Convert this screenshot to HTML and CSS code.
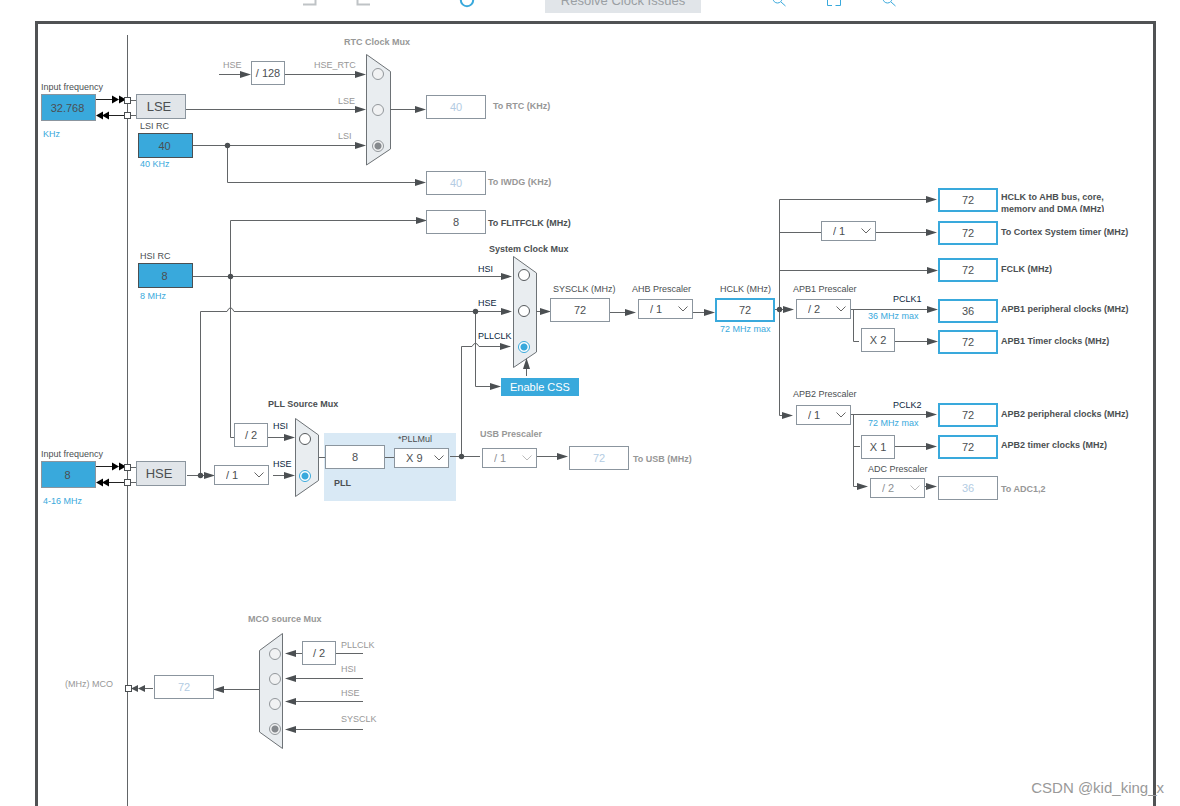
FILE: index.html
```html
<!DOCTYPE html>
<html lang="en">
<head>
<meta charset="utf-8">
<title>Clock Configuration</title>
<link rel="stylesheet" href="styles.css">
</head>
<body>
<div class="workspace">
  <header class="toolbar">
    <div class="tool-group history">
      <button class="tool" aria-label="Undo"><svg viewBox="0 0 16 13"><path class="grey" d="M2 11.5H14.5V0"/></svg></button>
      <button class="tool" aria-label="Redo"><svg viewBox="0 0 16 13"><path class="grey" d="M14 11.5H1.500V0"/></svg></button>
    </div>
    <button class="tool refresh" aria-label="Refresh"><svg viewBox="0 0 16 13"><circle class="blue thick" cx="8" cy="7" r="6.200"/></svg></button>
    <button class="resolve" disabled>Resolve Clock Issues</button>
    <div class="tool-group zoom">
      <button class="tool" aria-label="Zoom in"><svg viewBox="0 0 16 13"><circle class="blue" cx="6.500" cy="5.500" r="4.500"/><path class="blue" d="M10 9L14.500 13"/></svg></button>
      <button class="tool" aria-label="Fit to window"><svg viewBox="0 0 16 13"><path class="blue" d="M1.500 7V12.500H6M9.500 12.500H14.500V7"/></svg></button>
      <button class="tool" aria-label="Zoom out"><svg viewBox="0 0 16 13"><circle class="blue" cx="6.500" cy="5.500" r="4.500"/><path class="blue" d="M10 9L14.500 13"/></svg></button>
    </div>
  </header>

  <main class="board">
    <div class="pll-panel"></div>

    <svg class="wires" aria-hidden="true">
      <defs>
        <marker id="arrow" markerUnits="userSpaceOnUse" markerWidth="11" markerHeight="8" refX="11" refY="4" orient="auto"><path class="head" d="M0 .5L11 4L0 7.500Z"/></marker>
      </defs>
      <g class="mux">
        <path d="M366.500 54.500L390.500 71.500V149L366.500 165Z"/>
        <path d="M513.500 256.500L536.500 273V352L513.500 367.500Z"/>
        <path d="M295.500 418.500L318.500 435V480.500L295.500 496.500Z"/>
        <path d="M282.500 633.500L259.500 650.500V732L282.500 748.500Z"/>
      </g>
      <g class="wire">
        <path d="M127.500 35V806"/>
        <path d="M131 100.500H136M131 115.500H136M131 467.500H136M131 482.500H136"/>
        <path d="M186 109.500H358M193 145.500H358M227.500 145.500V182.500H418"/>
        <path d="M219 74.500H243M285 74.500H358M390 109.500H418"/>
        <path d="M193 276.500H503M230.500 437.500V220.500H420M230.500 437.500H234"/>
        <path d="M187 475.500H208M200.500 475.500V311.500H227Q230.500 304 234 311.500H503"/>
        <path d="M475.500 311.500V386.500H493M526.500 376V366M461.500 456.500V346.500H472Q475.500 340 479 346.500H503"/>
        <path d="M268 437.500H287M273 475.500H287M319 457.500H325M385 457.500H394M450 456.500H480M537 456.500H559"/>
        <path d="M536 311.500H544M610 312.500H628M693 312.500H708M775 309.500H786"/>
        <path d="M786 415.500H779.500V199.500H929M779.500 232.500H821M876 232.500H929M779.500 270.500H929"/>
        <path d="M851 309.500H929M853.500 309.500V341.500H859M895 341.500H929"/>
        <path d="M851 414.500H929M853.500 414.500V486.500H860M853.500 446.500H860M895 446.500H929M925 486.500H929"/>
        <path d="M153 688.500H140M259 689.500H222M302 653.500H293M336 653.500H363M363 678.500H293M363 701.500H293M363 729.500H293"/>
      </g>
      <g class="arrows">
        <path d="M241 74.500H251"/><path d="M356 74.500H366"/><path d="M356 109.500H366"/><path d="M356 145.500H366"/>
        <path d="M416 109.500H426"/><path d="M416 182.500H426"/><path d="M417 220.500H427"/>
        <path d="M502 276.500H512"/><path d="M502 311.500H512"/><path d="M501 346.500H511"/><path d="M491 386.500H501"/><path d="M526.500 369V358"/>
        <path d="M541 311.500H551"/><path d="M626 312.500H636"/><path d="M705 312.500H715"/><path d="M783 309.500H794"/><path d="M782 415.500H793"/>
        <path d="M926 199.500H937"/><path d="M926 232.500H937"/><path d="M927 270.500H938"/><path d="M927 309.500H938"/><path d="M927 341.500H938"/>
        <path d="M926 414.500H937"/><path d="M926 446.500H937"/><path d="M857 486.500H868"/><path d="M926 486.500H937"/>
        <path d="M206 475.500H215"/><path d="M284 437.500H295"/><path d="M284 475.500H295"/><path d="M557 456.500H568"/>
        <path d="M224 689.500H213"/><path d="M296 653.500H285"/><path d="M296 678.500H285"/><path d="M296 701.500H285"/><path d="M296 729.500H285"/>
      </g>
      <g class="dots">
        <circle cx="227.500" cy="145.500" r="2.700"/><circle cx="230.500" cy="276.500" r="2.700"/><circle cx="475.500" cy="311.500" r="2.700"/>
        <circle cx="200.500" cy="475.500" r="2.700"/><circle cx="461.500" cy="456.500" r="2.700"/><circle cx="779.500" cy="309.500" r="2.700"/>
        <path d="M131 688.500L138 685V692ZM138 688.500L145 685V692Z"/>
      </g>
      <g class="pins">
        <path d="M96 99.500H113M109 115.500H125M96 466.500H113M109 482.500H125"/>
        <path class="pin-head" d="M112 95.500L119 99.500L112 103.500ZM119 95.500L126 99.500L119 103.500ZM103 111.500L96 115.500L103 119.500ZM109 111.500L102 115.500L109 119.500Z"/>
        <path class="pin-head" d="M112 462.500L119 466.500L112 470.500ZM119 462.500L126 466.500L119 470.500ZM103 478.500L96 482.500L103 486.500ZM109 478.500L102 482.500L109 486.500Z"/>
      </g>
      <g class="ports">
        <rect x="124.500" y="97.500" width="6" height="6"/><rect x="124.500" y="112.500" width="6" height="6"/>
        <rect x="124.500" y="464.500" width="6" height="6"/><rect x="124.500" y="479.500" width="6" height="6"/>
        <rect x="125.500" y="685.500" width="6" height="6"/>
      </g>
    </svg>

    <label class="label lse-freq-label" for="lse-freq">Input frequency</label>
    <input class="source pin-source lse-freq" id="lse-freq" value="32.768">
    <span class="label limit lse-unit">KHz</span>
    <button class="oscillator lse">LSE</button>
    <label class="label lsi-label" for="lsi">LSI RC</label>
    <input class="source lsi" id="lsi" value="40" readonly>
    <span class="label limit lsi-unit">40 KHz</span>
    <label class="label hsi-label" for="hsi">HSI RC</label>
    <input class="source hsi" id="hsi" value="8" readonly>
    <span class="label limit hsi-unit">8 MHz</span>
    <label class="label hse-freq-label" for="hse-freq">Input frequency</label>
    <input class="source pin-source hse-freq" id="hse-freq" value="8">
    <span class="label limit hse-unit">4-16 MHz</span>
    <button class="oscillator hse">HSE</button>

    <span class="label title off rtc-title">RTC Clock Mux</span>
    <span class="label off rtc-hse-in">HSE</span>
    <span class="factor rtc-div">/ 128</span>
    <label class="label off rtc-hse-label" for="rtc-hse">HSE_RTC</label>
    <label class="label off rtc-lse-label" for="rtc-lse">LSE</label>
    <label class="label off rtc-lsi-label" for="rtc-lsi">LSI</label>
    <input type="radio" name="rtc" id="rtc-hse" class="rtc-hse" disabled>
    <input type="radio" name="rtc" id="rtc-lse" class="rtc-lse" disabled>
    <input type="radio" name="rtc" id="rtc-lsi" class="rtc-lsi" disabled checked>
    <input class="value rtc-out" id="rtc-out" value="40" disabled>
    <label class="label title off rtc-out-label" for="rtc-out">To RTC (KHz)</label>
    <input class="value iwdg" id="iwdg" value="40" disabled>
    <label class="label title off iwdg-label" for="iwdg">To IWDG (KHz)</label>
    <input class="value flitf" id="flitf" value="8" readonly>
    <label class="label title flitf-label" for="flitf">To FLITFCLK (MHz)</label>

    <span class="label title sys-title">System Clock Mux</span>
    <label class="label signal sys-hsi-label" for="sys-hsi">HSI</label>
    <label class="label signal sys-hse-label" for="sys-hse">HSE</label>
    <label class="label signal sys-pll-label" for="sys-pll">PLLCLK</label>
    <input type="radio" name="sys" id="sys-hsi" class="sys-hsi">
    <input type="radio" name="sys" id="sys-hse" class="sys-hse">
    <input type="radio" name="sys" id="sys-pll" class="sys-pll" checked>
    <button class="css-button">Enable CSS</button>

    <span class="label title pll-title">PLL Source Mux</span>
    <span class="factor pll-div">/ 2</span>
    <select class="pick hse-div" aria-label="HSE divider"><option>/ 1</option></select>
    <label class="label signal pll-hsi-label" for="pll-hsi">HSI</label>
    <label class="label signal pll-hse-label" for="pll-hse">HSE</label>
    <input type="radio" name="pll" id="pll-hsi" class="pll-hsi">
    <input type="radio" name="pll" id="pll-hse" class="pll-hse" checked>
    <input class="value pll-in" id="pll-in" value="8" readonly>
    <label class="label title pll-name" for="pll-in">PLL</label>
    <label class="label pll-mul-label" for="pll-mul">*PLLMul</label>
    <select class="pick pll-mul" id="pll-mul"><option>X 9</option></select>
    <label class="label title off usb-label" for="usb-div">USB Prescaler</label>
    <select class="pick usb-div" id="usb-div" disabled><option>/ 1</option></select>
    <input class="value usb" id="usb" value="72" disabled>
    <label class="label title off usb-out-label" for="usb">To USB (MHz)</label>

    <label class="label sysclk-label" for="sysclk">SYSCLK (MHz)</label>
    <input class="value sysclk" id="sysclk" value="72" readonly>
    <label class="label ahb-label" for="ahb">AHB Prescaler</label>
    <select class="pick ahb" id="ahb"><option>/ 1</option></select>
    <label class="label hclk-label" for="hclk">HCLK (MHz)</label>
    <input class="value editable hclk" id="hclk" value="72">
    <span class="label limit hclk-max">72 MHz max</span>
    <select class="pick cortex-div" aria-label="Cortex timer prescaler"><option>/ 1</option></select>
    <label class="label apb1-label" for="apb1">APB1 Prescaler</label>
    <select class="pick apb1" id="apb1"><option>/ 2</option></select>
    <span class="label signal pclk1">PCLK1</span>
    <span class="label limit pclk1-max">36 MHz max</span>
    <span class="factor apb1-mul">X 2</span>
    <label class="label apb2-label" for="apb2">APB2 Prescaler</label>
    <select class="pick apb2" id="apb2"><option>/ 1</option></select>
    <span class="label signal pclk2">PCLK2</span>
    <span class="label limit pclk2-max">72 MHz max</span>
    <span class="factor apb2-mul">X 1</span>
    <label class="label adc-label" for="adc-div">ADC Prescaler</label>
    <select class="pick adc-div" id="adc-div" disabled><option>/ 2</option></select>

    <input class="value editable out-ahb" id="out-ahb" value="72">
    <label class="label title out-ahb-label" for="out-ahb">HCLK to AHB bus, core,<br>memory and DMA (MHz)</label>
    <input class="value editable out-cortex" id="out-cortex" value="72">
    <label class="label title out-cortex-label" for="out-cortex">To Cortex System timer (MHz)</label>
    <input class="value editable out-fclk" id="out-fclk" value="72">
    <label class="label title out-fclk-label" for="out-fclk">FCLK (MHz)</label>
    <input class="value editable out-apb1" id="out-apb1" value="36">
    <label class="label title out-apb1-label" for="out-apb1">APB1 peripheral clocks (MHz)</label>
    <input class="value editable out-tim1" id="out-tim1" value="72">
    <label class="label title out-tim1-label" for="out-tim1">APB1 Timer clocks (MHz)</label>
    <input class="value editable out-apb2" id="out-apb2" value="72">
    <label class="label title out-apb2-label" for="out-apb2">APB2 peripheral clocks (MHz)</label>
    <input class="value editable out-tim2" id="out-tim2" value="72">
    <label class="label title out-tim2-label" for="out-tim2">APB2 timer clocks (MHz)</label>
    <input class="value out-adc" id="out-adc" value="36" disabled>
    <label class="label title off out-adc-label" for="out-adc">To ADC1,2</label>

    <span class="label title off mco-title">MCO source Mux</span>
    <span class="factor mco-div">/ 2</span>
    <label class="label off mco-pll-label" for="mco-pll">PLLCLK</label>
    <label class="label off mco-hsi-label" for="mco-hsi">HSI</label>
    <label class="label off mco-hse-label" for="mco-hse">HSE</label>
    <label class="label off mco-sys-label" for="mco-sys">SYSCLK</label>
    <input type="radio" name="mco" id="mco-pll" class="mco-pll" disabled>
    <input type="radio" name="mco" id="mco-hsi" class="mco-hsi" disabled>
    <input type="radio" name="mco" id="mco-hse" class="mco-hse" disabled>
    <input type="radio" name="mco" id="mco-sys" class="mco-sys" disabled checked>
    <input class="value mco" id="mco" value="72" disabled>
    <label class="label off mco-label" for="mco">(MHz) MCO</label>
  </main>
  <span class="watermark">CSDN @kid_king_x</span>
</div>
</body>
</html>
```

FILE: styles.css
```css
:root {
  --ink: #4b4f52;
  --edge: #8b959e;
  --wire: #626567;
  --blue: #39a9dc;
  --panel: #e1e5e9;
}

* { box-sizing: border-box; }

body {
  margin: 0;
  background: #fff;
  color: var(--ink);
  font-family: "Liberation Sans", Arial, sans-serif;
}

button, input, select {
  margin: 0;
  padding: 0;
  border-radius: 0;
  color: inherit;
  font-family: inherit;
  opacity: 1;
}

.workspace {
  position: relative;
  display: flex;
  flex-direction: column;
  min-height: 100vh;
  overflow: hidden;
}

/* Toolbar, scrolled partly out of view */
.toolbar {
  display: flex;
  align-items: flex-end;
  height: 13px;
  margin-bottom: 8px;
  padding-left: 301px;
}
.tool-group { display: flex; gap: 39px; }
.tool {
  display: block;
  width: 16px;
  height: 13px;
  margin-bottom: 7px;
  border: 0;
  background: none;
}
.tool svg { display: block; width: 16px; height: 13px; fill: none; overflow: visible; }
.tool .grey { stroke: #bfc3c6; stroke-width: 2; }
.tool .blue { stroke: var(--blue); stroke-width: 1; }
.tool .thick { stroke-width: 2; }
.refresh { margin-left: 87px; }
.resolve {
  width: 156px;
  height: 26px;
  margin-left: 70px;
  flex: none;
  border: 0;
  background: var(--panel);
  color: #9a9fa3;
  font-size: 13px;
}
.zoom { margin-left: 70px; }

.board {
  flex: 1;
  margin: 0 24px 0 35px;
  border: 3px solid #505254;
  border-bottom: 0;
}

/* Diagram canvas */
.wires {
  position: absolute;
  left: 0;
  top: 0;
  width: 100%;
  height: 100%;
  fill: none;
  pointer-events: none;
}
.wire { stroke: var(--wire); }
.mux { fill: #e9edf0; stroke: #6d7276; }
.arrows path { marker-end: url(#arrow); }
.head, .dots { fill: var(--ink); }
.pins { stroke: #222; }
.pin-head { fill: #000; stroke: none; }
.ports { fill: #fff; stroke: #4b4f52; }

.label, .value, .source, .pick, .factor, .oscillator, .css-button, .pll-panel, input[type="radio"] {
  position: absolute;
}

.label { font-size: 9px; line-height: 12px; white-space: nowrap; }
.title { font-weight: bold; }
.off { color: #979797; }
.limit { color: var(--blue); }
.signal { color: #0c1f3d; }

.value, .source, .factor, .pick { font-size: 11px; border: 1px solid var(--edge); background-color: #fff; }
.value { width: 60px; height: 24px; text-align: center; }
.value:disabled { color: #b3cce3; }
.editable { border: 2px solid var(--blue); }
.source { width: 55px; height: 25px; padding-right: 2px; border-color: var(--ink); background-color: var(--blue); text-align: center; }
.pin-source { height: 27px; border-color: var(--edge); }
.factor { width: 34px; height: 24px; line-height: 22px; text-align: center; }
.oscillator { width: 50px; height: 25px; padding-right: 4px; border: 1px solid var(--edge); background: var(--panel); font-size: 13px; }
.pick {
  width: 55px;
  height: 20px;
  padding-left: 11px;
  appearance: none;
  background-image: url("data:image/svg+xml,%3Csvg xmlns='http://www.w3.org/2000/svg' width='10' height='6'%3E%3Cpath d='M.5.5L5 5L9.500.5' fill='none' stroke='%23666'/%3E%3C/svg%3E");
  background-repeat: no-repeat;
  background-position: right 4px center;
}
.pick:disabled {
  color: #8d9194;
  background-image: url("data:image/svg+xml,%3Csvg xmlns='http://www.w3.org/2000/svg' width='10' height='6'%3E%3Cpath d='M.5.5L5 5L9.500.5' fill='none' stroke='%23bbb'/%3E%3C/svg%3E");
}
.css-button { left: 501px; top: 378px; width: 78px; height: 18px; border: 0; background: var(--blue); color: #fff; font-size: 11px; }

input[type="radio"] {
  width: 12px;
  height: 12px;
  appearance: none;
  border: 1px solid #55595c;
  border-radius: 50%;
  background: #fff;
}
input[type="radio"]:checked { border-color: var(--blue); background: radial-gradient(circle, var(--blue) 3px, #fff 4px); }
input[type="radio"]:disabled { border-color: #92979b; background: #f1f2f3; }
input[type="radio"]:disabled:checked { background: radial-gradient(circle, #85898d 3px, #f1f2f3 4px); }

/* Sources */
.lse-freq-label { left: 41px; top: 81px; }
.lse-freq { left: 41px; top: 94px; }
.lse-unit { left: 43px; top: 128px; }
.lse { left: 136px; top: 94px; }
.lsi-label { left: 140px; top: 120px; }
.lsi { left: 138px; top: 133px; }
.lsi-unit { left: 140px; top: 158px; }
.hsi-label { left: 140px; top: 250px; }
.hsi { left: 138px; top: 263px; }
.hsi-unit { left: 140px; top: 290px; }
.hse-freq-label { left: 41px; top: 448px; }
.hse-freq { left: 41px; top: 461px; }
.hse-unit { left: 43px; top: 495px; }
.hse { left: 136px; top: 461px; }

/* RTC and watchdog */
.rtc-title { left: 344px; top: 36px; }
.rtc-hse-in { left: 223px; top: 59px; }
.rtc-div { left: 251px; top: 61px; }
.rtc-hse-label { left: 314px; top: 59px; }
.rtc-lse-label { left: 338px; top: 95px; }
.rtc-lsi-label { left: 338px; top: 130px; }
.rtc-hse { left: 372px; top: 68px; }
.rtc-lse { left: 372px; top: 104px; }
.rtc-lsi { left: 372px; top: 140px; }
.rtc-out { left: 426px; top: 95px; }
.rtc-out-label { left: 493px; top: 100px; }
.iwdg { left: 426px; top: 171px; }
.iwdg-label { left: 488px; top: 176px; }
.flitf { left: 426px; top: 210px; }
.flitf-label { left: 488px; top: 217px; }

/* System clock mux */
.sys-title { left: 489px; top: 243px; }
.sys-hsi-label { left: 478px; top: 263px; }
.sys-hse-label { left: 478px; top: 297px; }
.sys-pll-label { left: 478px; top: 330px; }
.sys-hsi { left: 518px; top: 269px; }
.sys-hse { left: 518px; top: 305px; }
.sys-pll { left: 518px; top: 341px; }

/* PLL and USB */
.pll-title { left: 268px; top: 398px; }
.pll-div { left: 234px; top: 423px; }
.hse-div { left: 214px; top: 465px; }
.pll-hsi-label { left: 273px; top: 420px; }
.pll-hse-label { left: 273px; top: 458px; }
.pll-hsi { left: 299px; top: 433px; }
.pll-hse { left: 299px; top: 470px; }
.pll-panel { left: 324px; top: 433px; width: 132px; height: 68px; background: #d9e9f5; }
.pll-in { left: 325px; top: 445px; }
.pll-name { left: 334px; top: 477px; }
.pll-mul-label { left: 398px; top: 433px; }
.pll-mul { left: 394px; top: 448px; }
.usb-label { left: 480px; top: 428px; }
.usb-div { left: 482px; top: 448px; }
.usb { left: 569px; top: 446px; }
.usb-out-label { left: 633px; top: 453px; }

/* Bus clocks */
.sysclk-label { left: 553px; top: 283px; }
.sysclk { left: 550px; top: 298px; }
.ahb-label { left: 632px; top: 283px; }
.ahb { left: 638px; top: 299px; }
.hclk-label { left: 720px; top: 283px; }
.hclk { left: 715px; top: 298px; }
.hclk-max { left: 720px; top: 323px; }
.cortex-div { left: 821px; top: 221px; }
.apb1-label { left: 793px; top: 283px; }
.apb1 { left: 796px; top: 299px; }
.pclk1 { left: 893px; top: 293px; }
.pclk1-max { left: 868px; top: 310px; }
.apb1-mul { left: 861px; top: 328px; }
.apb2-label { left: 793px; top: 388px; }
.apb2 { left: 796px; top: 405px; }
.pclk2 { left: 893px; top: 399px; }
.pclk2-max { left: 868px; top: 417px; }
.apb2-mul { left: 861px; top: 435px; }
.adc-label { left: 868px; top: 463px; }
.adc-div { left: 870px; top: 478px; }

/* Outputs */
.out-ahb { left: 938px; top: 188px; }
.out-ahb-label { left: 1001px; top: 191px; height: 21px; overflow: hidden; }
.out-cortex { left: 938px; top: 221px; }
.out-cortex-label { left: 1001px; top: 226px; }
.out-fclk { left: 938px; top: 258px; }
.out-fclk-label { left: 1001px; top: 263px; }
.out-apb1 { left: 938px; top: 299px; }
.out-apb1-label { left: 1001px; top: 303px; }
.out-tim1 { left: 938px; top: 330px; }
.out-tim1-label { left: 1001px; top: 335px; }
.out-apb2 { left: 938px; top: 403px; }
.out-apb2-label { left: 1001px; top: 408px; }
.out-tim2 { left: 938px; top: 435px; }
.out-tim2-label { left: 1001px; top: 439px; }
.out-adc { left: 938px; top: 476px; }
.out-adc-label { left: 1001px; top: 483px; }

/* MCO */
.mco-title { left: 248px; top: 613px; }
.mco-div { left: 302px; top: 641px; }
.mco-pll-label { left: 341px; top: 639px; }
.mco-hsi-label { left: 341px; top: 663px; }
.mco-hse-label { left: 341px; top: 687px; }
.mco-sys-label { left: 341px; top: 713px; }
.mco-pll { left: 269px; top: 648px; }
.mco-hsi { left: 269px; top: 673px; }
.mco-hse { left: 269px; top: 698px; }
.mco-sys { left: 269px; top: 723px; }
.mco { left: 154px; top: 675px; }
.mco-label { left: 65px; top: 678px; }

.watermark {
  position: absolute;
  right: 16px;
  bottom: 9px;
  color: #999;
  font-size: 15px;
  line-height: 18px;
}
```
